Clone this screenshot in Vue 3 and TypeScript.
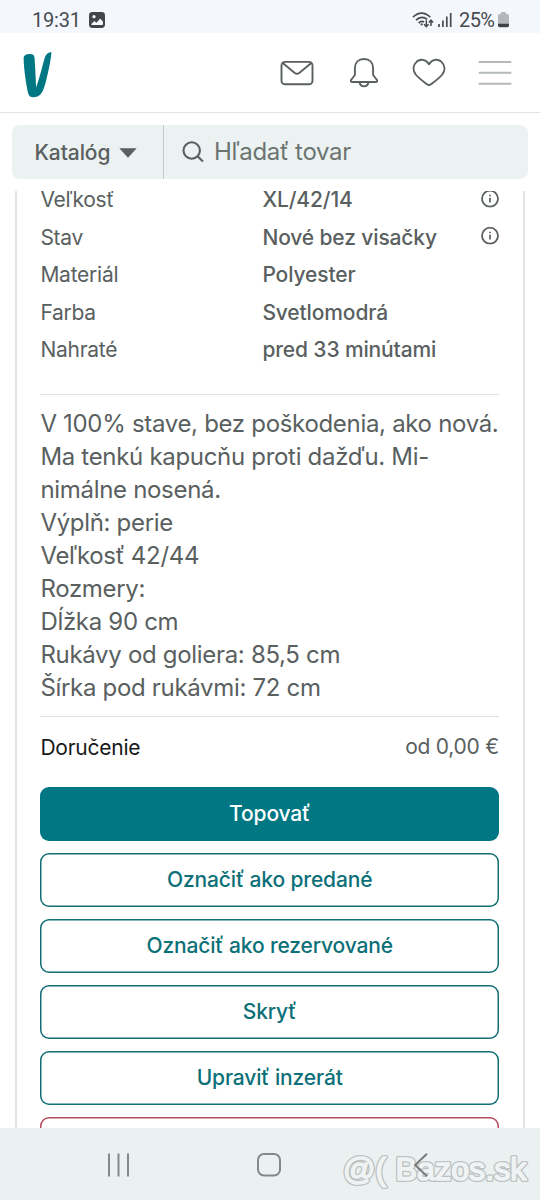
<script setup lang="ts">
interface Detail {
  label: string
  value: string
  info?: boolean
}

const details: Detail[] = [
  { label: 'Veľkosť', value: 'XL/42/14', info: true },
  { label: 'Stav', value: 'Nové bez visačky', info: true },
  { label: 'Materiál', value: 'Polyester' },
  { label: 'Farba', value: 'Svetlomodrá' },
  { label: 'Nahraté', value: 'pred 33 minútami' },
]

const description: string[] = [
  'V 100% stave, bez poškodenia, ako nová.',
  'Ma tenkú kapucňu proti dažďu. Mi-',
  'nimálne nosená.',
  'Výplň: perie',
  'Veľkosť 42/44',
  'Rozmery:',
  'Dĺžka 90 cm',
  'Rukávy od goliera: 85,5 cm',
  'Šírka pod rukávmi: 72 cm',
]

const actions: string[] = ['Označiť ako predané', 'Označiť ako rezervované', 'Skryť', 'Upraviť inzerát']
</script>

<template>
  <div class="screen">
    <div class="status">
      <span class="time">19:31</span>
      <svg class="pic" width="16" height="16" viewBox="0 0 16 16">
        <rect width="16" height="16" rx="3.4" fill="#43464b" />
        <circle cx="5" cy="4.7" r="1.6" fill="#f4f8fe" />
        <path d="M2.2 12.2 5.3 8.9 7.6 10.7 11.2 6.6 14 9.7V12.2Q14 13 13 13H3Q2.2 13 2.2 12.2Z" fill="#f4f8fe" />
      </svg>
      <svg class="wifi" width="24" height="18" viewBox="0 0 24 18" fill="none" stroke="#484b50" stroke-width="1.7">
        <path d="M1 6.2Q9.5-1.8 18.3 6.2" />
        <path d="M4 9.1Q9.5 3.8 15.2 8.4" />
        <path d="M6.7 12.2Q9.3 9.4 12 11" />
        <circle cx="9.6" cy="13.4" r="1.1" fill="#484b50" stroke="none" />
        <path d="M14.3 9.2V15.3M12 13.2 14.3 15.7 16.5 13.2M19 15V9.6M16.9 11.6 19 9.2 21.1 11.6" stroke-width="1.5" />
      </svg>
      <svg class="signal" width="14" height="16" viewBox="0 0 14 16" stroke="#484b50" stroke-width="1.7">
        <path d="M1 12V15M4.9 8.5V15M8.8 4.5V15M12.7 1V15" />
      </svg>
      <span class="percent">25%</span>
      <svg class="battery" width="11" height="16" viewBox="0 0 11 16">
        <path d="M3 1Q3 0 4 0H7Q8 0 8 1V2H9.5Q11 2 11 3.5V12H0V3.5Q0 2 1.5 2H3Z" fill="#b4b7bb" />
        <path d="M0 11.8H11V13.5Q11 15.3 9.2 15.3H1.8Q0 15.3 0 13.5Z" fill="#3e4146" />
      </svg>
    </div>

    <header class="header">
      <svg class="logo" width="29" height="46" viewBox="0 0 29 46" fill="#007782">
        <path d="M.7 5.5C1 3 3.2 2.2 6.2 2 9.6 1.8 11.2 2.8 11.5 5.5 12.2 14 12.6 24 13.1 35.5 17 25 19.2 14 22 5 23 2 25.5.5 28.4 0 28 6 26.5 15 24.2 24 22 33.5 20.5 39 17.4 42.5 14.8 45.3 7.4 46.8 5.6 42.4 3.7 36.5.3 13.5.7 5.5Z" />
      </svg>
      <div class="header-icons">
        <svg width="34" height="36" viewBox="0 0 34 36" fill="none" stroke="#59605f" stroke-width="1.9" stroke-linejoin="round">
          <rect x="1.5" y="6.9" width="31" height="22.4" rx="3.5" />
          <path d="M2.7 8.1 14.8 17.9Q17 19.6 19.2 17.9L31.3 8.1" />
        </svg>
        <svg class="bell" width="30" height="36" viewBox="0 0 30 36" fill="none" stroke="#59605f" stroke-width="1.9" stroke-linejoin="round">
          <path d="M5.9 20V13.4C5.9 7.6 9.5 4 15 4S24.1 7.6 24.1 13.4V20L28 25Q28.7 27 26.7 27H3.3Q1.3 27 2 25Z" />
          <path d="M10.5 27.4Q11.5 31.2 15 31.2T19.5 27.4" />
        </svg>
        <svg class="heart" width="34" height="36" viewBox="0 0 34 36" fill="none" stroke="#59605f" stroke-width="1.9" stroke-linejoin="round">
          <path d="M17 9.2C13.8 3.9 8.2 3.9 4.8 6.6.9 10.1.5 15.1 3.7 19.5 6.8 23.3 11.5 26.6 15.4 29.6Q17 30.8 18.6 29.6C22.5 26.6 27.2 23.3 30.3 19.5 33.5 15.1 33.1 10.1 29.2 6.6 25.8 3.9 20.2 3.9 17 9.2Z" />
        </svg>
        <svg width="34" height="36" viewBox="0 0 34 36" stroke="#b3b9b7" stroke-width="2" stroke-linecap="round">
          <path d="M1.5 7H32.5M1.5 17.8H32.5M1.5 28.7H32.5" />
        </svg>
      </div>
    </header>

    <div class="search">
      <div class="catalog">
        <span class="catalog-label">Katalóg</span>
        <svg class="caret" width="18" height="10" viewBox="0 0 18 10"><path d="M.3.3H17.7L9 9.7Z" fill="#59605f" /></svg>
      </div>
      <div class="query">
        <svg width="22" height="22" viewBox="0 0 22 22" fill="none" stroke="#59605f" stroke-width="2.1">
          <circle cx="9.7" cy="9.5" r="8.2" />
          <path d="M15.3 15 21 20.5" />
        </svg>
        <span class="placeholder">Hľadať tovar</span>
      </div>
    </div>

    <main class="viewport">
      <section class="card">
        <div v-for="d in details" :key="d.label" class="row">
          <span class="label">{{ d.label }}</span>
          <span class="value">{{ d.value }}</span>
          <svg v-if="d.info" class="info" width="18" height="18" viewBox="0 0 18 18">
            <circle cx="9" cy="9" r="8" fill="none" stroke="#59605f" stroke-width="1.8" />
            <path d="M9 8V12.7M9 5V6.6" stroke="#59605f" stroke-width="1.7" />
          </svg>
        </div>
        <div class="description">
          <div v-for="line in description" :key="line">{{ line }}</div>
        </div>
        <div class="shipping">
          <span class="shipping-label">Doručenie</span>
          <span class="price">od 0,00 €</span>
        </div>
        <div class="actions">
          <button class="btn primary">Topovať</button>
          <button v-for="a in actions" :key="a" class="btn">{{ a }}</button>
          <button class="btn danger"></button>
        </div>
      </section>
    </main>

    <nav class="nav">
      <svg class="recents" width="24" height="24" viewBox="0 0 24 24" stroke="#858888" stroke-width="2">
        <path d="M2 .5V23.5M11.5 .5V23.5M21 .5V23.5" />
      </svg>
      <svg class="home" width="24" height="24" viewBox="0 0 24 24" fill="none" stroke="#858888" stroke-width="2">
        <rect x="1" y="1" width="22" height="21.5" rx="6" />
      </svg>
      <svg class="back" width="14" height="24" viewBox="0 0 14 24" fill="none" stroke="#777a7a" stroke-width="1.9">
        <path d="M13 .7 1.2 12 13 23.3" />
      </svg>
      <svg class="watermark" width="196" height="44" viewBox="0 0 196 44">
        <g class="mark-outline">
          <text x="4" y="32" textLength="43" lengthAdjust="spacingAndGlyphs">@(</text>
          <text x="56.5" y="32" textLength="131" lengthAdjust="spacingAndGlyphs">Bazos.sk</text>
        </g>
        <g class="mark-fill" aria-hidden="true">
          <text x="4" y="32" textLength="43" lengthAdjust="spacingAndGlyphs">@(</text>
          <text x="56.5" y="32" textLength="131" lengthAdjust="spacingAndGlyphs">Bazos.sk</text>
        </g>
      </svg>
    </nav>
  </div>
</template>

<style>
body {
  margin: 0;
  background: #fff;
}
</style>

<style scoped>
.screen {
  width: 540px;
  height: 1200px;
  display: flex;
  flex-direction: column;
  overflow: hidden;
  background: #fff;
  color: #59605f;
  font-family: Inter, "Liberation Sans", sans-serif;
}
.screen svg {
  flex: none;
  display: block;
}
.status {
  box-sizing: border-box;
  height: 33px;
  padding: 7px 31px 0 32px;
  display: flex;
  align-items: center;
  background: #f4f8fe;
  color: #484b50;
  font: 20px/26px Roboto, sans-serif;
}
.time {
  width: 57px;
  letter-spacing: -0.2px;
}
.wifi {
  margin-left: auto;
}
.signal {
  margin: 0 7px 0 2px;
}
.percent {
  width: 39px;
  letter-spacing: -0.6px;
}
.header {
  box-sizing: border-box;
  height: 80px;
  padding: 0 28px 0 23px;
  display: flex;
  align-items: center;
  justify-content: space-between;
  border-bottom: 1px solid #e3e5e5;
}
.logo {
  margin-top: 4px;
}
.header-icons {
  display: flex;
  width: 232px;
  justify-content: space-between;
}
.bell {
  margin: 0 -1.5px 0 1.5px;
}
.heart {
  margin: 0 -1px 0 1px;
}
.search {
  height: 54px;
  margin: 12px 12px 0;
  display: flex;
  border-radius: 8px;
  background: #ebf2f1;
}
.catalog {
  box-sizing: border-box;
  width: 152px;
  padding-left: 22.5px;
  display: flex;
  align-items: center;
  border-right: 1px solid #c3cac8;
}
.catalog-label {
  width: 84.5px;
  font-size: 21px;
  font-weight: 500;
  letter-spacing: -0.1px;
}
.caret {
  margin-top: 2px;
}
.query {
  display: flex;
  align-items: center;
  padding-left: 18px;
  gap: 10px;
}
.placeholder {
  font-size: 24px;
  line-height: 28px;
  letter-spacing: -0.33px;
  color: #6c7472;
}
.viewport {
  height: 937px;
  margin-top: 12px;
  overflow: hidden;
}
.card {
  box-sizing: border-box;
  width: 510px;
  height: 1000px;
  margin: -10px 0 0 15px;
  padding: 0 24px 0 23.4px;
  border: solid #e4e6e6;
  border-width: 0 2px;
}
.row {
  height: 37.5px;
  display: flex;
  align-items: center;
  font-size: 21px;
}
.label {
  width: 222px;
  letter-spacing: -0.25px;
}
.value {
  font-weight: 500;
  letter-spacing: -0.13px;
}
.info {
  margin-left: auto;
  transform: translateY(-1.3px);
}
.description {
  margin-top: 25px;
  padding: 12px 0;
  border-top: 1px solid #dfe1e1;
  border-bottom: 1px solid #dfe1e1;
  font-size: 24px;
  line-height: 33px;
  letter-spacing: -0.31px;
  white-space: nowrap;
}
.shipping {
  height: 60px;
  display: flex;
  align-items: center;
  justify-content: space-between;
  font-size: 21px;
  letter-spacing: -0.24px;
}
.shipping-label {
  padding-top: 1px;
  color: #171919;
}
.actions {
  display: flex;
  flex-direction: column;
  gap: 12px;
  padding-top: 10px;
}
.btn {
  height: 54px;
  flex: none;
  margin: 0;
  padding: 1px 0 0;
  border: 0;
  border-radius: 9px;
  box-shadow: inset 0 0 0 1.5px #126f76;
  background: #fff;
  color: #0c7078;
  font: 500 21px/24px Inter, sans-serif;
  letter-spacing: -0.15px;
}
.primary {
  box-shadow: none;
  background: #007782;
  color: #fff;
}
.danger {
  box-shadow: inset 0 0 0 1.5px #b64c5b;
}
.nav {
  box-sizing: border-box;
  position: relative;
  height: 72px;
  padding: 1px 112px 0 107px;
  display: flex;
  align-items: center;
  justify-content: space-between;
  background: #ebf1f1;
}
.home {
  margin: 0 3.5px 0 -3.5px;
}
.back {
  position: relative;
  z-index: 1;
}
.watermark {
  position: absolute;
  left: 339px;
  top: 20px;
}
.mark-outline,
.mark-fill {
  font-family: "Liberation Sans", Arial, sans-serif;
  font-size: 32px;
  stroke-linejoin: round;
}
.mark-outline {
  fill: #bcc1c1;
  stroke: #bcc1c1;
  stroke-width: 4.2px;
}
.mark-fill {
  fill: #eff3f3;
  stroke: #eff3f3;
  stroke-width: 1.6px;
}
</style>
